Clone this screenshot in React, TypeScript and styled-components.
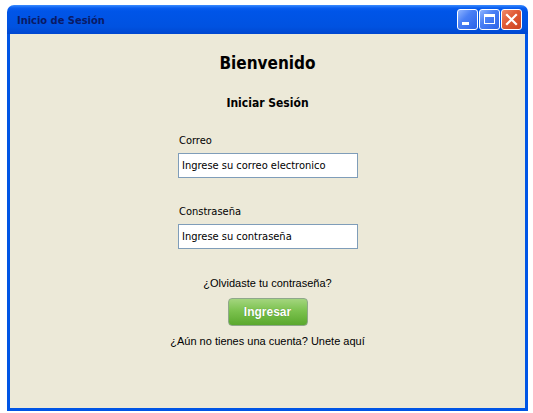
import React from "react";
import styled, { createGlobalStyle } from "styled-components";

const Global = createGlobalStyle`
  html, body { margin: 0; padding: 0; background: #ffffff; }
  body { font-family: "DejaVu Sans Condensed", "DejaVu Sans", sans-serif; }
`;

const Window = styled.div`
  margin: 5px 0 0 7px;
  width: 521px;
  height: 406px;
  display: flex;
  flex-direction: column;
`;

const TitleBar = styled.div`
  height: 29px;
  box-sizing: border-box;
  border-radius: 7px 7px 0 0;
  background: linear-gradient(180deg, #3a8cff 0px, #0a5ef0 3px, #0055e8 6px, #0052e0 22px, #0047d0 29px);
  display: flex;
  align-items: center;
  padding: 0 6px 0 10px;
`;

const Title = styled.div`
  flex: 1;
  font-family: "DejaVu Sans Condensed", "DejaVu Sans", sans-serif;
  font-weight: bold;
  font-size: 11px;
  color: #0a1a66;
  padding-top: 1px;
`;

const Buttons = styled.div`
  display: flex;
  gap: 1px;
`;

const CtlButton = styled.div<{ $close?: boolean }>`
  width: 21px;
  height: 21px;
  box-sizing: border-box;
  border: 1px solid #ffffff;
  border-radius: 3px;
  background: ${(p) =>
    p.$close
      ? "linear-gradient(135deg, #f08a6a 0%, #e05a35 45%, #cc4420 100%)"
      : "linear-gradient(135deg, #8fb4ff 0%, #4a80f5 40%, #2a62e8 100%)"};
  display: flex;
  align-items: center;
  justify-content: center;
`;

const Content = styled.div`
  flex: 1;
  background: #ece9d8;
  border: 3px solid #0055e5;
  border-top: none;
  display: flex;
  flex-direction: column;
  align-items: center;
`;

const Heading = styled.h1`
  margin: 18px 0 0;
  font-family: "DejaVu Sans Condensed", "DejaVu Sans", sans-serif;
  font-size: 17px;
  font-weight: bold;
  color: #000;
  line-height: 22px;
`;

const SubHeading = styled.h2`
  margin: 21px 0 0;
  font-family: "DejaVu Sans Condensed", "DejaVu Sans", sans-serif;
  font-size: 12px;
  font-weight: bold;
  color: #000;
  line-height: 16px;
`;

const Form = styled.div`
  width: 180px;
  margin-top: 23px;
  margin-left: 1px;
  display: flex;
  flex-direction: column;
`;

const Field = styled.div<{ $gap: number }>`
  display: flex;
  flex-direction: column;
  margin-top: ${(p) => p.$gap}px;
`;

const Label = styled.label`
  font-family: "DejaVu Sans Condensed", "DejaVu Sans", sans-serif;
  font-size: 11px;
  color: #000;
  line-height: 14px;
  padding-left: 1px;
  margin-bottom: 5px;
`;

const Input = styled.div`
  height: 25px;
  width: 180px;
  box-sizing: border-box;
  border: 1px solid #7f9db9;
  background: #fff;
  font-family: "DejaVu Sans Condensed", "DejaVu Sans", sans-serif;
  font-size: 11px;
  color: #000;
  display: flex;
  align-items: center;
  padding-left: 3px;
`;

const Link = styled.div<{ $top: number }>`
  margin-top: ${(p) => p.$top}px;
  font-family: "Liberation Sans", Arial, sans-serif;
  font-size: 11px;
  color: #000;
  line-height: 14px;
`;

const Submit = styled.button`
  margin-top: 8px;
  width: 80px;
  height: 28px;
  border: 1px solid #8fa88a;
  border-radius: 4px;
  background: linear-gradient(180deg, #a3d57e 0%, #7cc24f 45%, #5aa82d 100%);
  color: #fff;
  font-family: "Liberation Sans", Arial, sans-serif;
  font-weight: bold;
  font-size: 12px;
  text-shadow: 0 0 1px rgba(40, 90, 10, 0.6);
  padding: 0;
`;

export default function App() {
  return (
    <>
      <Global />
      <Window>
        <TitleBar>
          <Title>Inicio de Sesión</Title>
          <Buttons>
            <CtlButton>
              <svg width="19" height="19" viewBox="0 0 19 19">
                <rect x="4" y="12" width="7" height="3" fill="#fff" />
              </svg>
            </CtlButton>
            <CtlButton>
              <svg width="19" height="19" viewBox="0 0 19 19">
                <rect x="4.5" y="4.5" width="10" height="9" fill="none" stroke="#fff" strokeWidth="1" />
                <rect x="4" y="4" width="11" height="3" fill="#fff" />
              </svg>
            </CtlButton>
            <CtlButton $close>
              <svg width="19" height="19" viewBox="0 0 19 19">
                <path d="M5 5 L14 14 M14 5 L5 14" stroke="#fff" strokeWidth="2.2" strokeLinecap="square" />
              </svg>
            </CtlButton>
          </Buttons>
        </TitleBar>
        <Content>
          <Heading>Bienvenido</Heading>
          <SubHeading>Iniciar Sesión</SubHeading>
          <Form>
            <Field $gap={0}>
              <Label>Correo</Label>
              <Input>Ingrese su correo electronico</Input>
            </Field>
            <Field $gap={27}>
              <Label>Constraseña</Label>
              <Input>Ingrese su contraseña</Input>
            </Field>
          </Form>
          <Link $top={27}>¿Olvidaste tu contraseña?</Link>
          <Submit>Ingresar</Submit>
          <Link $top={8}>¿Aún no tienes una cuenta? Unete aquí</Link>
        </Content>
      </Window>
    </>
  );
}
